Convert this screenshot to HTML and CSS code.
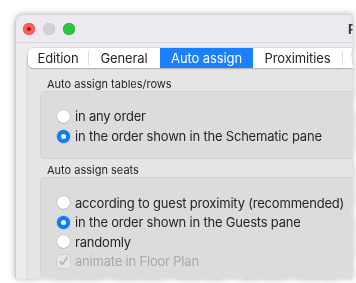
FILE: index.html
```html
<!DOCTYPE html>
<html>
<head>
<meta charset="utf-8">
<link rel="stylesheet" href="styles.css">
</head>
<body>
<div class="frame">
  <div class="window">
    <div class="titlebar">
      <span class="light red"><span class="dot"></span></span>
      <span class="light grey"></span>
      <span class="light green"></span>
      <span class="title">Preferences</span>
    </div>
    <div class="content">
      <div class="tabview">
        <div class="tabs">
          <div class="tab t1">Edition</div>
          <div class="tab t2">General</div>
          <div class="tab t3 active">Auto assign</div>
          <div class="tab t4">Proximities</div>
          <div class="tab t5">Floor Plan</div>
        </div>
        <div class="glabel first">Auto assign tables/rows</div>
        <div class="group g1">
          <div class="row"><span class="radio"></span>in any order</div>
          <div class="row"><span class="radio on"></span>in the order shown in the Schematic pane</div>
        </div>
        <div class="glabel">Auto assign seats</div>
        <div class="group g2">
          <div class="row"><span class="radio"></span>according to guest proximity (recommended)</div>
          <div class="row"><span class="radio on"></span>in the order shown in the Guests pane</div>
          <div class="row"><span class="radio"></span>randomly</div>
          <div class="row disabled"><span class="check"><svg width="11" height="11" viewBox="0 0 11 11"><path d="M2 5.8 L4.4 8.4 L9 1.8" fill="none" stroke="#b4b4b4" stroke-width="1.6" stroke-linecap="round" stroke-linejoin="round"/></svg></span>animate in Floor Plan</div>
        </div>
      </div>
    </div>
  </div>
</div>
</body>
</html>
```
FILE: styles.css
```css
html, body {
  margin: 0;
  padding: 0;
  background: #ffffff;
  width: 356px;
  height: 283px;
  overflow: hidden;
  font-family: Inter, "Liberation Sans", sans-serif;
  color: #262626;
}
.frame {
  padding: 14px 0 0 15px;
  filter: drop-shadow(0 0 3px rgba(0,0,0,0.3));
}
.window {
  width: 338px;
  height: 265px;
  box-sizing: border-box;
  border-radius: 9px 0 0 0;
  border-left: 1px solid #cfcbd1;
  border-top: 1px solid #d6d2d8;
  background: #ececec;
  overflow: hidden;
  display: flex;
  flex-direction: column;
  clip-path: polygon(0 0, 338px 0, 336px 6px, 338px 12px, 337px 20px, 338px 30px, 336px 40px, 338px 52px, 337px 64px, 338px 78px, 336px 92px, 338px 104px, 337px 118px, 338px 130px, 336px 144px, 338px 158px, 337px 170px, 338px 184px, 336px 198px, 338px 212px, 337px 226px, 338px 238px, 336px 250px, 338px 262px, 336px 265px, 328px 263px, 318px 265px, 306px 264px, 292px 265px, 278px 263px, 262px 265px, 248px 264px, 232px 265px, 218px 263px, 202px 265px, 186px 264px, 170px 265px, 156px 263px, 140px 265px, 124px 264px, 108px 265px, 94px 263px, 78px 265px, 62px 264px, 46px 265px, 30px 263px, 16px 265px, 0 264px);
}
.titlebar {
  height: 27px;
  flex-shrink: 0;
  background: #ede9f0;
  border-bottom: 1px solid #d9d5dc;
  display: flex;
  align-items: center;
  padding-left: 7px;
  gap: 8px;
  white-space: nowrap;
}
.light {
  width: 12px;
  height: 12px;
  border-radius: 50%;
  flex-shrink: 0;
  display: flex;
  align-items: center;
  justify-content: center;
}
.red { background: #fe5f57; box-shadow: inset 0 0 0 0.5px #e14640; }
.red .dot { width: 4px; height: 4px; border-radius: 50%; background: #8c1a10; }
.grey { background: #d5d1d8; box-shadow: inset 0 0 0 0.5px #c4c0c7; }
.green { background: #28c840; box-shadow: inset 0 0 0 0.5px #1fa934; }
.title {
  margin-left: 265px;
  font-size: 13px;
  font-weight: 700;
  color: #333;
  flex-shrink: 0;
}
.content {
  flex: 1;
  display: flex;
  padding-left: 10px;
  background: #ececec;
}
.tabview {
  flex: 1;
  margin-top: 15px;
  border-left: 1px solid #d8d8d8;
  border-top: 1px solid #d3d3d3;
  background: #e5e5e5;
  display: flex;
  flex-direction: column;
  min-width: 0;
}
.tabs {
  margin-top: -11px;
  margin-left: 1px;
  height: 20px;
  display: flex;
  background: #ffffff;
  border-radius: 5px 0 0 5px;
  box-shadow: 0 0 0 0.5px rgba(0,0,0,0.15), 0 1px 1.5px rgba(0,0,0,0.18);
  font-size: 13px;
  line-height: 20px;
  letter-spacing: -0.1px;
  white-space: nowrap;
  overflow: hidden;
}
.tab {
  flex-shrink: 0;
  text-align: center;
  position: relative;
  color: #262626;
}
.tab + .tab::before {
  content: "";
  position: absolute;
  left: 0;
  top: 3px;
  bottom: 3px;
  width: 1px;
  background: #dcdcdc;
}
.t1 { width: 60px; border-radius: 5px 0 0 5px; }
.t2 { width: 72px; }
.t3 { width: 93px; }
.t4 { width: 89px; }
.t5 { width: 100px; }
.tab.active {
  background: #1a80fb;
  color: #ffffff;
}
.tab.active::before, .tab.active + .tab::before { display: none; }
.glabel {
  margin: 4px 0 0 20px;
  font-size: 11px;
  line-height: 14px;
  color: #262626;
}
.glabel.first { margin-top: 9px; }
.group {
  margin-left: 13px;
  margin-right: -20px;
  background: #dcdcdc;
  border: 1px solid #d3d3d3;
  border-radius: 5px;
  box-sizing: border-box;
}
.g1 { height: 68px; padding-top: 14px; }
.g2 { flex: 1; padding-top: 15px; }
.row {
  height: 20px;
  display: flex;
  align-items: center;
  gap: 5px;
  padding-left: 16px;
  font-size: 13px;
  letter-spacing: -0.2px;
  white-space: nowrap;
}
.g2 .row { height: 19.5px; }
.radio {
  width: 13px;
  height: 13px;
  border-radius: 50%;
  background: #ffffff;
  box-sizing: border-box;
  box-shadow: 0 0 0 0.5px rgba(0,0,0,0.12), 0 0.5px 1px rgba(0,0,0,0.2);
  flex-shrink: 0;
  display: flex;
  align-items: center;
  justify-content: center;
}
.radio.on {
  background: #0a7dfd;
  box-shadow: 0 0 0 0.5px rgba(0,80,200,0.3);
}
.radio.on::after {
  content: "";
  width: 5px;
  height: 5px;
  border-radius: 50%;
  background: #ffffff;
}
.check {
  width: 13px;
  height: 13px;
  border-radius: 3px;
  background: #e6e6e6;
  box-shadow: 0 0 0 0.5px rgba(0,0,0,0.1);
  flex-shrink: 0;
  display: flex;
  align-items: center;
  justify-content: center;
}
.row.disabled { color: #a9a9a9; }
```
